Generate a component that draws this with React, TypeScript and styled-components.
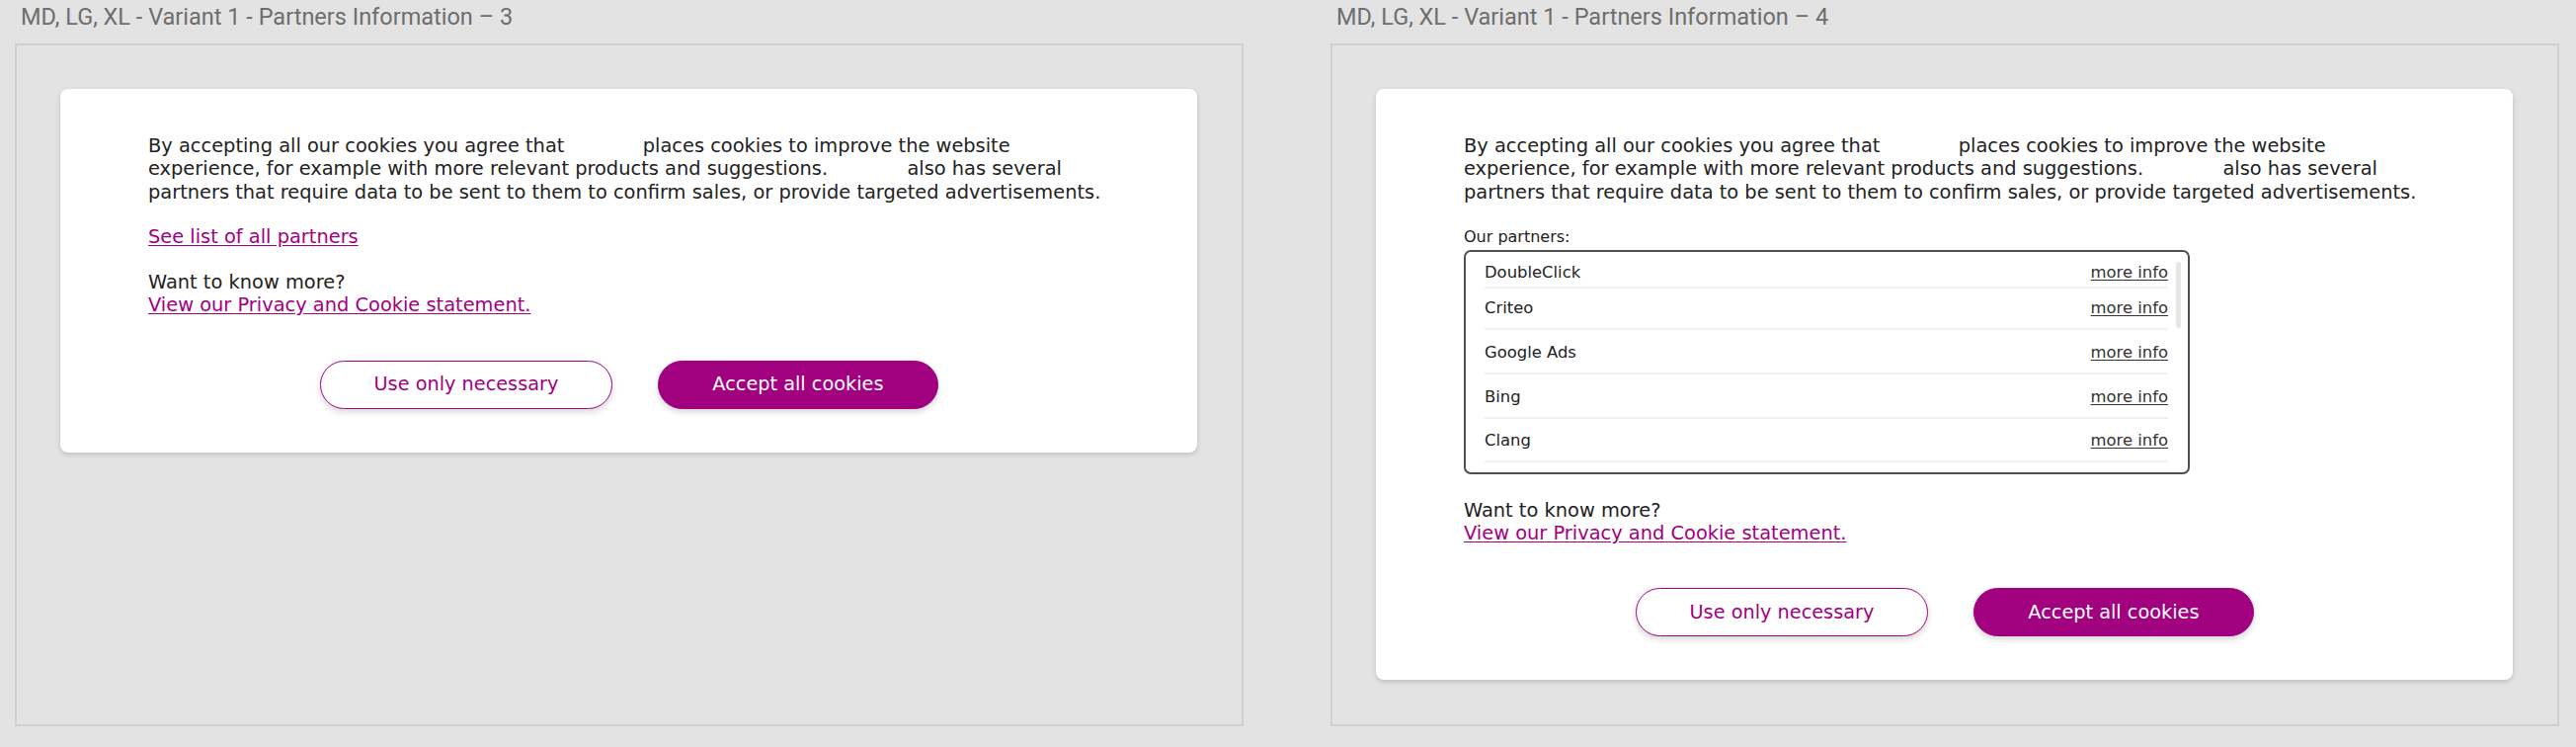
import React from "react";
import styled, { createGlobalStyle } from "styled-components";

const GlobalStyle = createGlobalStyle`
  html, body {
    margin: 0;
    padding: 0;
    background: #e3e3e3;
  }
  * { box-sizing: border-box; }
`;

const PURPLE = "#a1007f";

const Page = styled.div`
  display: flex;
  gap: 88px;
  padding-left: 15px;
  width: 2608px;
  height: 756px;
  background: #e3e3e3;
`;

const Column = styled.section`
  display: flex;
  flex-direction: column;
  width: 1244px;
`;

const FrameLabel = styled.div`
  height: 44px;
  padding: 3px 0 0 6px;
  font-family: Roboto, "Liberation Sans", sans-serif;
  font-size: 23.5px;
  line-height: 28px;
  color: #6e6e6e;
  white-space: nowrap;
`;

const Frame = styled.div`
  height: 691px;
  border: 2px solid #d0d0d0;
  padding: 44px;
`;

const Card = styled.div`
  width: 1151px;
  background: #ffffff;
  border-radius: 8px;
  box-shadow: 0 2px 5px rgba(0, 0, 0, 0.16);
  padding: 45.6px 89px 44px;
  font-family: "DejaVu Sans", Verdana, sans-serif;
  font-size: 19.4px;
  line-height: 23.5px;
  color: #222222;
  display: flex;
  flex-direction: column;
`;

const Paragraph = styled.p<{ $gap?: number }>`
  margin: ${(p) => p.$gap ?? 0}px 0 0;
  white-space: nowrap;
`;

const Redacted = styled.span<{ $w: number }>`
  display: inline-block;
  width: ${(p) => p.$w}px;
`;

const Link = styled.a`
  color: ${PURPLE};
  text-decoration: underline;
  text-underline-offset: 2px;
  cursor: pointer;
`;

const PartnersLabel = styled.div`
  margin-top: 24px;
  font-size: 16px;
  line-height: 19px;
  color: #222222;
`;

const PartnerBox = styled.div`
  margin-top: 4px;
  width: 735px;
  height: 227px;
  border: 2px solid #505050;
  border-radius: 7px;
  padding: 0 7px 0 19px;
  display: flex;
  gap: 8px;
  overflow: hidden;
`;

const PartnerList = styled.ul`
  flex: 1;
  margin: 0;
  padding: 0;
  list-style: none;
`;

const PartnerRow = styled.li<{ $pt: number; $pb: number }>`
  display: flex;
  justify-content: space-between;
  align-items: baseline;
  padding: ${(p) => p.$pt}px 0 ${(p) => p.$pb}px;
  border-bottom: 2px solid #efefef;
  font-size: 16.4px;
  line-height: 20px;
  color: #222222;
`;

const MoreInfo = styled.a`
  color: #333333;
  text-decoration: underline;
  text-underline-offset: 2px;
  cursor: pointer;
`;

const ScrollTrack = styled.div`
  width: 5px;
  flex: none;
  padding-top: 10px;
`;

const ScrollThumb = styled.div`
  height: 67px;
  border-radius: 3px;
  background: #e6e6e6;
`;

const Buttons = styled.div<{ $gap: number }>`
  display: flex;
  justify-content: center;
  gap: 46px;
  margin-top: ${(p) => p.$gap}px;
`;

const Button = styled.button<{ $filled?: boolean }>`
  height: 49px;
  padding: 0 54px;
  border-radius: 25px;
  border: 1.5px solid ${PURPLE};
  background: ${(p) => (p.$filled ? PURPLE : "#ffffff")};
  color: ${(p) => (p.$filled ? "#ffffff" : PURPLE)};
  font-family: "DejaVu Sans", Verdana, sans-serif;
  font-size: 19.3px;
  line-height: 23.5px;
  box-shadow: 0 3px 6px rgba(0, 0, 0, 0.16);
  cursor: pointer;
`;

const Intro: React.FC = () => (
  <Paragraph>
    By accepting all our cookies you agree that <Redacted $w={67} /> places cookies to improve the website
    <br />
    experience, for example with more relevant products and suggestions. <Redacted $w={68} /> also has several
    <br />
    partners that require data to be sent to them to confirm sales, or provide targeted advertisements.
  </Paragraph>
);

const partners = [
  { name: "DoubleClick", pt: 11, pb: 4 },
  { name: "Criteo", pt: 10, pb: 10 },
  { name: "Google Ads", pt: 13, pb: 10 },
  { name: "Bing", pt: 13, pb: 10 },
  { name: "Clang", pt: 12, pb: 10 },
];

const MoreAndButtons: React.FC<{ top: number; buttonsGap: number }> = ({ top, buttonsGap }) => (
  <>
    <Paragraph $gap={top}>
      Want to know more?
      <br />
      <Link>View our Privacy and Cookie statement.</Link>
    </Paragraph>
    <Buttons $gap={buttonsGap}>
      <Button>Use only necessary</Button>
      <Button $filled>Accept all cookies</Button>
    </Buttons>
  </>
);

export default function App() {
  return (
    <>
      <GlobalStyle />
      <Page>
        <Column>
          <FrameLabel>MD, LG, XL - Variant 1 - Partners Information – 3</FrameLabel>
          <Frame>
            <Card>
              <Intro />
              <Paragraph $gap={21.5}>
                <Link>See list of all partners</Link>
              </Paragraph>
              <MoreAndButtons top={22.5} buttonsGap={44} />
            </Card>
          </Frame>
        </Column>
        <Column>
          <FrameLabel>MD, LG, XL - Variant 1 - Partners Information – 4</FrameLabel>
          <Frame>
            <Card>
              <Intro />
              <PartnersLabel>Our partners:</PartnersLabel>
              <PartnerBox>
                <PartnerList>
                  {partners.map((p) => (
                    <PartnerRow key={p.name} $pt={p.pt} $pb={p.pb}>
                      <span>{p.name}</span>
                      <MoreInfo>more info</MoreInfo>
                    </PartnerRow>
                  ))}
                </PartnerList>
                <ScrollTrack>
                  <ScrollThumb />
                </ScrollTrack>
              </PartnerBox>
              <MoreAndButtons top={24.6} buttonsGap={43.4} />
            </Card>
          </Frame>
        </Column>
      </Page>
    </>
  );
}
